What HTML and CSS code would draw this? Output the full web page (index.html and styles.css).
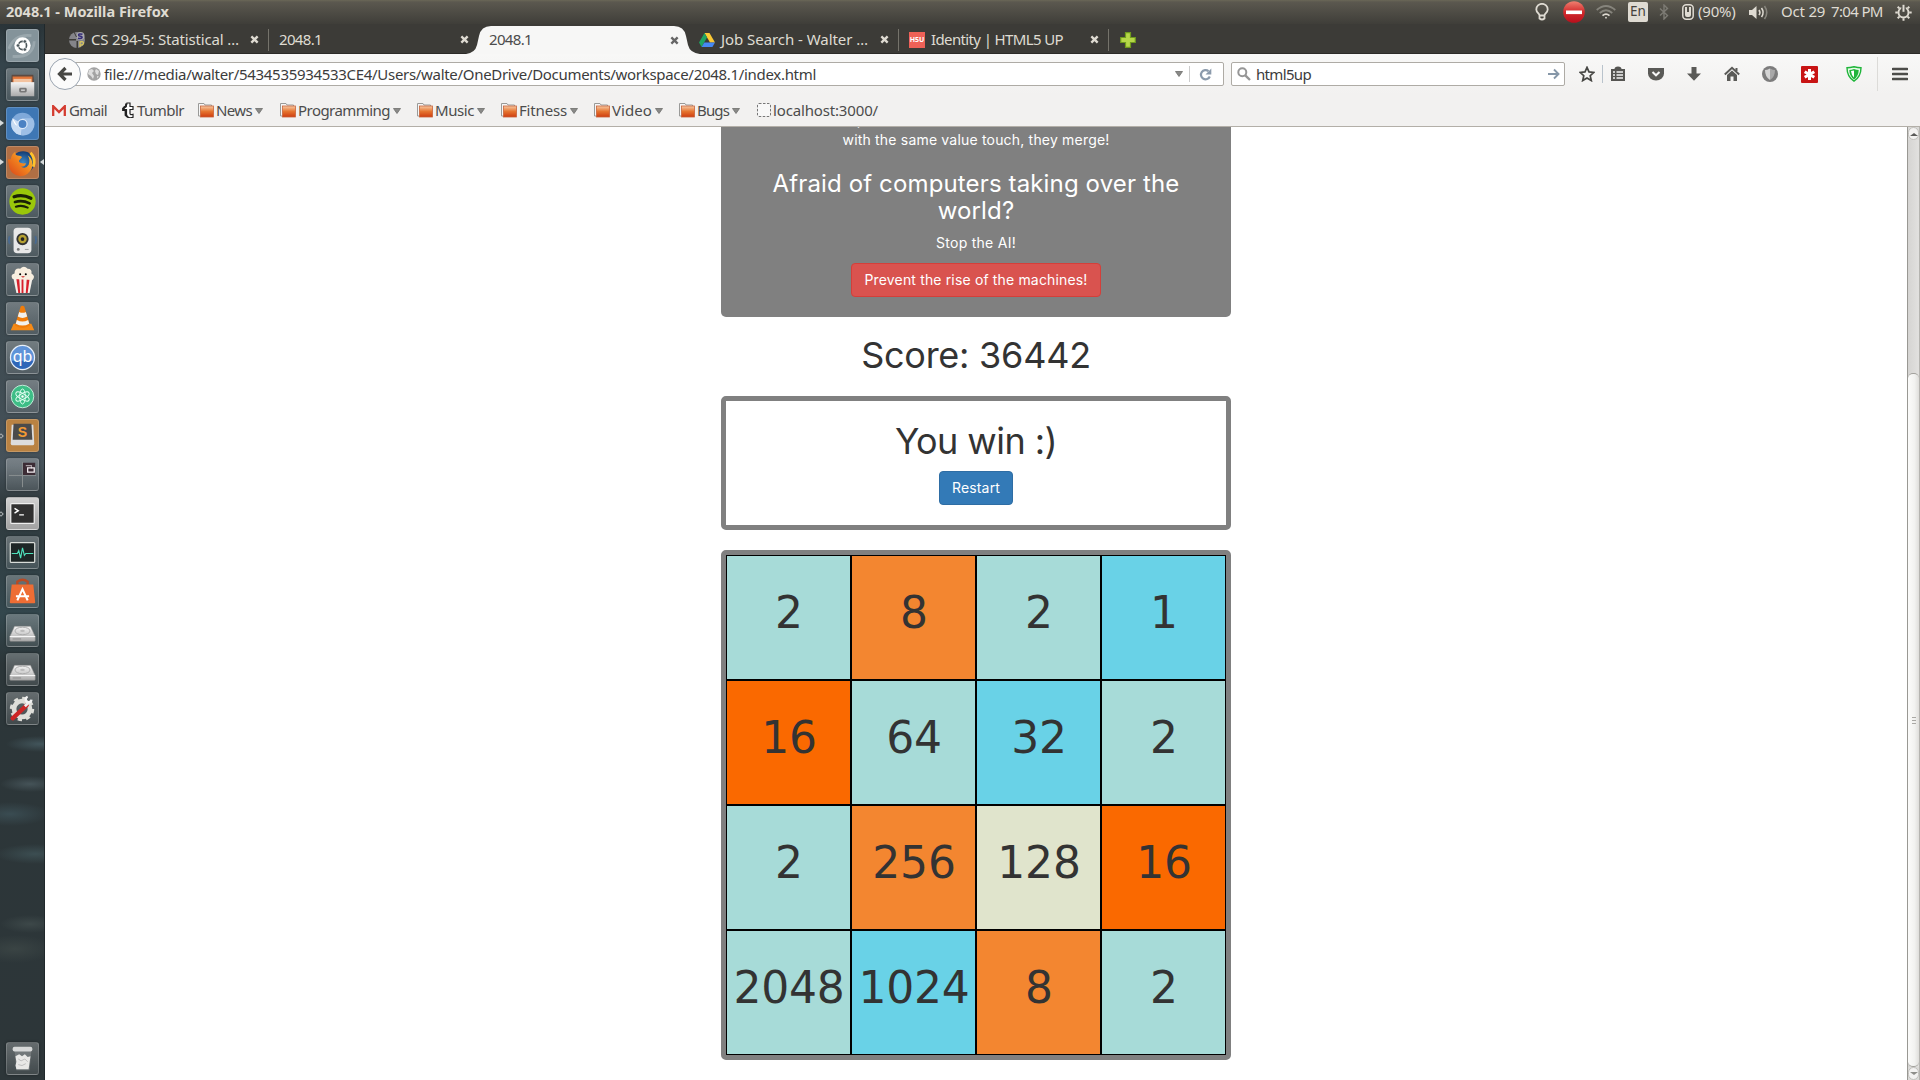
FILE: index.html
```html
<!DOCTYPE html>
<html lang="en">
<head>
<meta charset="utf-8">
<title>2048.1</title>
<link rel="stylesheet" href="styles.css">
</head>
<body>
<svg class="defs" width="0" height="0">
  <defs>
    <linearGradient id="folderFill" x1="0" y1="0" x2="0" y2="1"><stop offset="0" stop-color="#f8c9a4"/><stop offset=".5" stop-color="#e5742f"/><stop offset="1" stop-color="#cf3d10"/></linearGradient>
    <linearGradient id="metal" x1="0" y1="0" x2="0" y2="1"><stop offset="0" stop-color="#f4f4f4"/><stop offset="1" stop-color="#aaa"/></linearGradient>
    <radialGradient id="globe"><stop offset="0" stop-color="#3f8bc9"/><stop offset="1" stop-color="#123a72"/></radialGradient>
    <linearGradient id="fox" x1="1" y1="0" x2="0" y2="1"><stop offset="0" stop-color="#ffd23c"/><stop offset=".5" stop-color="#f0801e"/><stop offset="1" stop-color="#d8431a"/></linearGradient>
    <linearGradient id="stopRed" x1="0" y1="0" x2="0" y2="1"><stop offset="0" stop-color="#f08070"/><stop offset=".5" stop-color="#d22a2c"/><stop offset="1" stop-color="#b80f1c"/></linearGradient>
    <symbol id="folder" viewBox="0 0 16 16"><path d="M.5 14V1.500h5.500l1 1.500h6.500V14z" fill="#f6f6f6" stroke="#9a9a98"/><rect x="2.500" y="4" width="13" height="11" fill="url(#folderFill)" stroke="#c9633a" stroke-width=".8"/></symbol>
    <symbol id="close" viewBox="0 0 10 10"><path d="M1.500 1.500l7 7M8.500 1.500l-7 7" stroke="currentColor" stroke-width="2.600"/></symbol>
    <symbol id="tri" viewBox="0 0 8 6"><path d="M.5.5h7L4 5.500z" fill="#8a8a88" stroke="#6d6d6b" stroke-width=".8"/></symbol>
    <symbol id="disk" viewBox="0 0 33 33"><path d="M8 12h17l5 11v4q0 1-1 1H4q-1 0-1-1v-4z" fill="url(#metal)" stroke="#888" stroke-width=".6"/><path d="M3 23h27" stroke="#fff"/><ellipse cx="16.500" cy="17" rx="8" ry="4" fill="none" stroke="#aaa"/><ellipse cx="16.500" cy="17" rx="2.500" ry="1.200" fill="#bbb"/><path d="M6 25.500h9" stroke="#888"/></symbol>
  </defs>
</svg>

<header class="panel">
  <span class="panel-title">2048.1 - Mozilla Firefox</span>
  <div class="indicators">
    <svg class="i-bulb" width="14" height="18" viewBox="0 0 14 18"><path d="M4.500 12.500C4.500 10.500 1.300 9.500 1.300 6.500a5.700 5.700 0 0 1 11.400 0c0 3-3.200 4-3.200 6zM4.500 12.500v3q2.500 2 5 0v-3" fill="none" stroke="#dfdbd2" stroke-width="1.800"/></svg>
    <svg class="i-stop" width="22" height="22" viewBox="0 0 22 22"><circle cx="11" cy="11" r="10.800" fill="url(#stopRed)"/><rect x="3" y="9.500" width="16" height="3.600" fill="#fff"/></svg>
    <svg class="i-wifi" width="20" height="14" viewBox="0 0 20 14" fill="none" stroke="#86847c" stroke-width="1.700"><path d="M.7 5q9.300-8 18.600 0M3.700 8q6.300-5.500 12.600 0"/><path d="M6.500 10.700q3.500-3 7 0" stroke="#dfdbd2"/><circle cx="10" cy="12.700" r=".9" fill="#dfdbd2" stroke="none"/></svg>
    <span class="i-lang">En</span>
    <svg class="i-bt" width="10" height="16" viewBox="0 0 10 16"><path d="M1 4.500l7.500 7L5 15V1l3.500 3.500-7.500 7" fill="none" stroke="#7d7b74" stroke-width="1.400"/></svg>
    <svg class="i-mouse" width="12" height="16" viewBox="0 0 12 16"><rect x=".8" y=".8" width="10.400" height="14.400" rx="3.500" fill="none" stroke="#dfdbd2" stroke-width="1.500"/><path d="M3 3h2v5h2V3h2v8q0 2-2 2H5q-2 0-2-2z" fill="#dfdbd2"/></svg>
    <span class="i-bat">(90%)</span>
    <svg class="i-vol" width="20" height="15" viewBox="0 0 20 15"><path d="M0 5h3l4.500-4v13L3 10H0z" fill="#dfdbd2"/><path d="M10 5q1.800 2.500 0 5M12.500 3q3.200 4.500 0 9" fill="none" stroke="#dfdbd2" stroke-width="1.600"/><path d="M15.500 1q4.500 6.500 0 13" fill="none" stroke="#86847c" stroke-width="1.600"/></svg>
    <span class="i-date">Oct 29</span>
    <span class="i-time">7:04 PM</span>
    <svg class="i-gear" width="17" height="17" viewBox="0 0 17 17" stroke="#dfdbd2" fill="none"><circle cx="8.500" cy="8.500" r="5" stroke-width="1.900"/><path d="M8.500 2v6" stroke="#4e4c46" stroke-width="4.500"/><path d="M8.500.8v7" stroke-width="2"/><path d="M.3 8.500h2.500M14.200 8.500h2.500M8.500 14.200v2.500M2.700 2.700l1.700 1.700M14.300 2.700l-1.700 1.700M2.700 14.300l1.700-1.700M14.300 14.300l-1.700-1.700" stroke-width="2"/></svg>
  </div>
</header>

<div class="desktop">
<nav class="launcher">
  <div class="tile dash"><svg viewBox="0 0 33 33"><path d="M2 20Q8 4 26 6M6 28Q28 30 29 12" fill="none" stroke="#c3ced2" stroke-width="3" opacity=".35"/><circle cx="16.500" cy="16.500" r="8.700" fill="#fff"/><circle cx="16.500" cy="16.500" r="4.300" fill="none" stroke="#4b565a" stroke-width="1.800"/><g fill="#4b565a" stroke="#fff" stroke-width=".8"><circle cx="11.700" cy="16.500" r="1.900"/><circle cx="19" cy="12.200" r="1.900"/><circle cx="19" cy="20.800" r="1.900"/></g></svg></div>
  <div class="tile"><svg viewBox="0 0 33 33"><path d="M5 6h23l1 10H4z" fill="#5e4a40"/><path d="M6 8h21v6H6z" fill="#e1763a"/><path d="M7 10.500h19v5H7z" fill="#f3c3a0"/><path d="M4 14h25v15H4z" fill="url(#metal)"/><rect x="13" y="20" width="8" height="5" rx="1.500" fill="#777"/><path d="M15 22.500h4" stroke="#fff"/></svg></div>
  <div class="tile blue"><svg viewBox="0 0 33 33"><circle cx="16.500" cy="17" r="12" fill="#7fa9da"/><path d="M16.500 17L6 11A12 12 0 0 0 15 29z" fill="#c8dcf3"/><path d="M16.500 17V11h11A12 12 0 0 1 15 29z" fill="#9dbfe6"/><path d="M6 11q1 7 5 8" fill="#fff"/><circle cx="16.500" cy="17" r="5.500" fill="#dce9f8"/><circle cx="16.500" cy="17" r="4.200" fill="#4b82c3"/></svg><i class="pip"></i></div>
  <div class="tile brown"><svg viewBox="0 0 33 33"><circle cx="17" cy="16.500" r="12" fill="url(#globe)"/><path d="M4 13Q5 7 9 5q-1 3 2 4 4 0 5 2l-3 3q-1 2 2 3 3 1 5 0 0 4-5 4 5 3 8-2 2-6-1-10 5 3 5 9a12.500 12.500 0 0 1-25 1q-1-3-1-6z" fill="url(#fox)"/><path d="M25 6q6 6 3 15" stroke="#ffc22c" stroke-width="3" fill="none"/></svg><i class="pip"></i><i class="pip right"></i></div>
  <div class="tile"><svg viewBox="0 0 33 33"><circle cx="16.500" cy="16.500" r="14" fill="#9ac70a"/><g fill="none" stroke="#1a2106" stroke-linecap="round"><path d="M7.500 11.500q9-3 18 1.500" stroke-width="3.400"/><path d="M8.500 17q8-2.500 15.500 1.500" stroke-width="2.900"/><path d="M9.500 22q6.500-2 12.500 1" stroke-width="2.300"/></g></svg></div>
  <div class="tile"><svg viewBox="0 0 33 33"><path d="M3 12q-2 4 0 8M30 12q2 4 0 8" stroke="#4a6a90" stroke-width="2" fill="none"/><rect x="7" y="3" width="19" height="27" rx="4" fill="#e8e8e8"/><circle cx="16.500" cy="15" r="6.500" fill="#333"/><circle cx="16.500" cy="15" r="4.500" fill="#b5a032"/><circle cx="16.500" cy="15" r="2" fill="#222"/><circle cx="12" cy="26" r="1.500" fill="#777"/><path d="M19 26h4" stroke="#999"/></svg></div>
  <div class="tile"><svg viewBox="0 0 33 33"><path d="M7 16h20l-3 15H10z" fill="#f5f0ea"/><path d="M10 16l2 15h2l-1-15zM15.500 16v15h2V16zM21 16l-1 15h2l2-15z" fill="#d8202c"/><path d="M6 16q-3-5 2-6 0-6 6-5 4-4 8 0 5 0 4 5 5 3 1 7z" fill="#f8efe0"/><circle cx="14" cy="11" r="1.100"/><circle cx="20" cy="11" r="1.100"/><path d="M15 13q2 3 4 0z" fill="#c22"/></svg></div>
  <div class="tile"><svg viewBox="0 0 33 33"><path d="M7 22h19l3 7H4z" fill="#f58a16"/><path d="M16.500 3q1.500 0 2 1l6 20q-8 5-16 0l6-20q.5-1 2-1z" fill="#f07c0a"/><path d="M13 9.500q3.500 2 7 0l1.500 5q-5 3-10 0zM10.500 18q6 3.500 12 0l1.200 4q-7 4-14.400 0z" fill="#f1f1ee"/></svg></div>
  <div class="tile"><svg viewBox="0 0 33 33"><circle cx="16.500" cy="16.500" r="12.800" fill="#5f93d8" stroke="#e8f0fa" stroke-width="1.300"/><path d="M5 20a12 12 0 0 0 23 0z" fill="#2f66b8"/><text x="16.500" y="21" text-anchor="middle" font-family="Noto Sans" font-size="17" fill="#fff">qb</text></svg></div>
  <div class="tile"><svg viewBox="0 0 33 33"><circle cx="16.500" cy="16.500" r="12" fill="#3dbd86" stroke="#c9f0de"/><g fill="none" stroke="#e6fff4" stroke-width="1"><ellipse cx="16.500" cy="16.500" rx="3" ry="8"/><ellipse cx="16.500" cy="16.500" rx="3" ry="8" transform="rotate(60 16.500 16.500)"/><ellipse cx="16.500" cy="16.500" rx="3" ry="8" transform="rotate(120 16.500 16.500)"/></g><circle cx="16.500" cy="16.500" r="1.300" fill="#fff"/></svg></div>
  <div class="tile tan"><svg viewBox="0 0 33 33"><path d="M5 5h23l1 20q0 2-2 2H6q-2 0-2-2z" fill="#ddd"/><path d="M7 4h19l1 17H6z" fill="#4b4b4b"/><text x="16.500" y="18.500" text-anchor="middle" font-family="Liberation Sans" font-weight="bold" font-size="15" fill="#f39a34">S</text></svg><i class="pip hollow"></i></div>
  <div class="tile"><svg viewBox="0 0 33 33"><path d="M16.500 3v27M2 17.500h29" stroke="#8b9091"/><rect x="17" y="4" width="13" height="13" fill="#3c2c35"/><path d="M20 7h6v3" stroke="#a89ea4" fill="none" stroke-width="1.200"/><path d="M22 9.500h7v4.500h-7z" stroke="#f0eaee" fill="none" stroke-width="1.400"/></svg></div>
  <div class="tile light"><svg viewBox="0 0 33 33"><rect x="4" y="6" width="25" height="21" rx="1" fill="#303030" stroke="#eee" stroke-width="1.300"/><path d="M8 11l4 2.500L8 16M13 18h5" stroke="#fff" fill="none" stroke-width="1.500"/></svg><i class="pip hollow"></i></div>
  <div class="tile"><svg viewBox="0 0 33 33"><rect x="3.500" y="6" width="26" height="21" rx="1" fill="#1e2626" stroke="#d8dcd8" stroke-width="1.300"/><path d="M5 17.500h6l1.500-3 2 8 2-11 2 8 1.500-2h8" stroke="#50e3bd" fill="none" stroke-width="1.200"/></svg></div>
  <div class="tile"><svg viewBox="0 0 33 33"><path d="M11 10V6q5.500-4 11 0v4" stroke="#b84a24" stroke-width="2.500" fill="none"/><path d="M5 9h23l2 19q0 1-1 1H4q-1 0-1-1z" fill="#ee6d34"/><path d="M11 26l5.500-12L22 26M9.500 21.500h14" stroke="#fff" stroke-width="2.200" fill="none"/></svg></div>
  <div class="tile"><svg><use href="#disk"/></svg></div>
  <div class="tile"><svg><use href="#disk"/></svg></div>
  <div class="tile"><svg viewBox="0 0 33 33"><circle cx="16" cy="17" r="8.500" fill="none" stroke="#deded9" stroke-width="5"/><circle cx="16" cy="17" r="11.500" fill="none" stroke="#deded9" stroke-width="3" stroke-dasharray="4.500 4.500"/><path d="M6 27L21 13" stroke="#cc2525" stroke-width="4.500" stroke-linecap="round"/><path d="M19 14l4-4" stroke="#eee" stroke-width="3"/><path d="M26 7a3 3 0 1 1-4-3" fill="none" stroke="#f2f2f2" stroke-width="2.500"/></svg></div>
  <div class="tile trash"><svg viewBox="0 0 33 33"><path d="M8 7h18l-2 22H10z" fill="#7d8384" opacity=".7"/><rect x="6" y="4" width="21" height="5" rx="2" fill="#d6d8d8"/><path d="M9 14l4-2 3 2 3-2 3 3 3-1-2 14H10l-1-4 1-4z" fill="#e8e8e6"/><path d="M12 17l3 2 4-2 3 3M12 23l4 1 4-2" stroke="#bbb" fill="none"/></svg></div>
</nav>

<main class="browser">
  <div class="tabs">
    <div class="tab"><svg class="fav" width="16" height="16" viewBox="0 0 16 16"><circle cx="8" cy="8" r="8" fill="#85858a"/><circle cx="11.500" cy="4" r="4" fill="#a9a9ae"/><path d="M0 7h7v1.500H0zM7.500 9h1.500v7H7.500z" fill="#3c3b37"/><path d="M5 0l2.500 5" stroke="#3c3b37"/><path d="M13.500 2.300q-4-1-4 .8 0 1.200 2 1.200 2 .3 1.500 1.500-1 1.200-4 .4" fill="none" stroke="#352d78" stroke-width="1.500"/><path d="M11 15V10q4-1 3.500 1.500Q14 13.500 11 13" fill="none" stroke="#d9c65c" stroke-width="1.300"/></svg><span class="label l-cs">CS 294-5: Statistical …</span><svg class="x" width="9" height="9"><use href="#close"/></svg></div>
    <div class="tab plain"><span class="label l-num">2048.1</span><svg class="x" width="9" height="9"><use href="#close"/></svg></div>
    <div class="tab plain active"><svg class="shape" width="236" height="29" viewBox="0 0 236 29"><path d="M0 29q9-1 11-9l2-9Q15 1 25 1H208q10 0 12 10l2 9q2 8 12 9z" fill="#f7f7f6"/></svg><span class="label l-num">2048.1</span><svg class="x" width="9" height="9"><use href="#close"/></svg></div>
    <div class="tab"><svg class="fav" width="16" height="16" viewBox="0 0 16 16"><path d="M5.500 1h5L16 10.500h-5z" fill="#fcc934"/><path d="M5.500 1L0 10.500 2.600 15 8 5.500z" fill="#1fa463"/><path d="M5.300 10.500H16L13.400 15H2.600z" fill="#4688f4"/></svg><span class="label l-job">Job Search - Walter …</span><svg class="x" width="9" height="9"><use href="#close"/></svg></div>
    <div class="tab"><span class="fav hsu">H5U</span><span class="label l-id">Identity | HTML5 UP</span><svg class="x" width="9" height="9"><use href="#close"/></svg></div>
    <svg class="plus" width="16" height="16" viewBox="0 0 16 16"><path d="M5.500.7h5v4.800h4.800v5h-4.800v4.800h-5v-4.800H.7v-5h4.800z" fill="#b5d648" stroke="#6f9a1d" stroke-width="1.200"/></svg>
  </div>

  <div class="toolbar">
    <div class="back"><svg width="16" height="16" viewBox="0 0 16 16"><path d="M8.500 2L2.500 8l6 6M3 8h12" fill="none" stroke="#474744" stroke-width="3.200"/></svg></div>
    <div class="urlbar">
      <svg class="world" width="14" height="14" viewBox="0 0 14 14"><circle cx="7" cy="7" r="6.700" fill="#a3a3a3"/><path d="M2 3l3-1 2 2-2 2 2 3-1 3-2-3-3-2zM9 2l3 2-1 4-2-1-1-3zM10 9l2 .5-2 2z" fill="#dedede"/></svg>
      <span class="url">file:///media/walter/5434535934533CE4/Users/walte/OneDrive/Documents/workspace/2048.1/index.html</span>
      <svg class="drop" width="8" height="6"><use href="#tri"/></svg>
      <span class="bar"></span>
      <svg class="reload" width="13" height="13" viewBox="0 0 13 13"><path d="M10.800 8.500A4.600 4.600 0 1 1 9.500 3.200" fill="none" stroke="#8b9aab" stroke-width="2.200"/><path d="M12.300.5v6H6.500z" fill="#8b9aab"/></svg>
    </div>
    <div class="search">
      <svg width="14" height="14" viewBox="0 0 14 14"><circle cx="5.300" cy="5.300" r="4" fill="none" stroke="#969696" stroke-width="2"/><path d="M8.300 8.300l4.700 4.700" stroke="#969696" stroke-width="2.400"/></svg>
      <span class="query">html5up</span>
      <svg class="go" width="12" height="12" viewBox="0 0 12 12"><path d="M0 6h10M6 1.500L10.500 6 6 10.500" fill="none" stroke="#8697a8" stroke-width="1.900"/></svg>
    </div>
    <div class="tools">
      <svg width="16" height="16" viewBox="0 0 16 16"><path d="M8 1.400l2 4.500 4.900.5-3.700 3.300 1.100 4.900L8 12.100l-4.300 2.500 1.100-4.900L1.100 6.400 6 5.900z" fill="none" stroke="#474744" stroke-width="1.700"/></svg>
      <span class="bar"></span>
      <svg width="16" height="16" viewBox="0 0 16 16"><path d="M1 3h3.500q0-2.500 3.500-2.500T11.500 3H15v12H1z" fill="#555552"/><path d="M3 6h2M3 9h2M3 12h2M6.500 6H13M6.500 9H13M6.500 12H13" stroke="#f4f4f3" stroke-width="1.600"/></svg>
      <svg width="16" height="16" viewBox="0 0 16 16"><path d="M0 2h16v5.500a8 7 0 0 1-16 0z" fill="#5a5a57"/><path d="M4.500 6L8 9.300 11.500 6" fill="none" stroke="#f7f7f7" stroke-width="2"/></svg>
      <svg width="16" height="16" viewBox="0 0 16 16"><path d="M5.500 1h5v6.500H15L8 14.700 1 7.500h4.500z" fill="#5a5a57"/></svg>
      <svg width="16" height="16" viewBox="0 0 16 16"><path d="M.8 8.500L8 1.800l7.200 6.700M12.500 2v3" fill="none" stroke="#5a5a57" stroke-width="2"/><path d="M3 9l5-4.500L13 9v6H9.500v-4.500h-3V15H3z" fill="#5a5a57"/></svg>
      <svg width="16" height="16" viewBox="0 0 16 16"><circle cx="8" cy="8" r="8" fill="#7c7c7c"/><path d="M8 2.500q3 1.500 5 1.500 0 7-5 10z" fill="#a8a8a8"/><path d="M8 2.500Q5 4 3 4q0 7 5 10z" fill="#d4d4d4"/></svg>
      <svg class="t-red" width="17" height="17" viewBox="0 0 17 17"><rect width="17" height="17" rx="1" fill="#c81414"/><path d="M8.500 3v11M3.700 5.700l9.600 5.600M13.300 5.700l-9.600 5.600" stroke="#fff" stroke-width="3"/></svg>
      <svg class="t-green" width="16" height="16" viewBox="0 0 16 16"><path d="M8 .8q4 1 7 1 0 9-7 13.400Q1 10.800 1 1.800q3 0 7-1z" fill="#e9fbe9" stroke="#1fb53a" stroke-width="1.400"/><path d="M8 3q2.500 1 4.700 1 0 6-4.700 9.500Q3.300 10 3.300 4 5.500 4 8 3z" fill="#1fb53a"/><path d="M8 4.500v7q-2.700-2.500-3-6.500z" fill="#fff"/></svg>
      <span class="bar tall"></span>
      <svg width="16" height="14" viewBox="0 0 16 14"><path d="M1 2h14M1 7h14M1 12h14" stroke="#4d4d4a" stroke-width="2.600" stroke-linecap="round"/></svg>
    </div>
  </div>

  <div class="bookmarks">
    <div class="bm gmail"><svg width="14" height="11" viewBox="0 0 14 11"><rect width="14" height="11" fill="#f6f3f2"/><path d="M1.200 11V1.200L7 7l5.800-5.800V11" fill="none" stroke="#d43c30" stroke-width="2.300"/></svg><span>Gmail</span></div>
    <div class="bm tumblr"><svg width="13" height="16" viewBox="0 0 13 16"><path d="M5 1h3v3.500h3v3H8v4q0 1.700 3 .8v3Q4.500 17 4.500 12V7.500H2V5q3-1 3-4z" fill="#fff" stroke="#222" stroke-width="1.200"/><path d="M4 1.500v3L1 6.500V8h2.500v5L6 15.300" fill="none" stroke="#222" stroke-width="1.800"/></svg><span>Tumblr</span></div>
    <div class="bm news"><svg width="16" height="16"><use href="#folder"/></svg><span>News</span><svg class="caret" width="8" height="6"><use href="#tri"/></svg></div>
    <div class="bm prog"><svg width="16" height="16"><use href="#folder"/></svg><span>Programming</span><svg class="caret" width="8" height="6"><use href="#tri"/></svg></div>
    <div class="bm music"><svg width="16" height="16"><use href="#folder"/></svg><span>Music</span><svg class="caret" width="8" height="6"><use href="#tri"/></svg></div>
    <div class="bm fit"><svg width="16" height="16"><use href="#folder"/></svg><span>Fitness</span><svg class="caret" width="8" height="6"><use href="#tri"/></svg></div>
    <div class="bm video"><svg width="16" height="16"><use href="#folder"/></svg><span>Video</span><svg class="caret" width="8" height="6"><use href="#tri"/></svg></div>
    <div class="bm bugs"><svg width="16" height="16"><use href="#folder"/></svg><span>Bugs</span><svg class="caret" width="8" height="6"><use href="#tri"/></svg></div>
    <div class="bm local"><svg width="14" height="14" viewBox="0 0 14 14"><rect x=".5" y=".5" width="13" height="13" rx="1.500" fill="#f8f8f8" stroke="#777" stroke-dasharray="2.500 1.500"/></svg><span>localhost:3000/</span></div>
  </div>

  <div class="viewport">
    <div class="page">
      <section class="intro">
        <p class="cut">p</p>
        <p class="merge">with the same value touch, they merge!</p>
        <h3>Afraid of computers taking over the<br>world?</h3>
        <p class="stop">Stop the AI!</p>
        <button class="btn danger">Prevent the rise of the machines!</button>
      </section>
      <h1 class="score">Score: 36442</h1>
      <section class="result">
        <h1>You win :)</h1>
        <button class="btn primary">Restart</button>
      </section>
      <section class="board">
        <div class="cell teal">2</div><div class="cell orange">8</div><div class="cell teal">2</div><div class="cell cyan">1</div>
        <div class="cell deep">16</div><div class="cell teal">64</div><div class="cell cyan">32</div><div class="cell teal">2</div>
        <div class="cell teal">2</div><div class="cell orange">256</div><div class="cell cream">128</div><div class="cell deep">16</div>
        <div class="cell teal">2048</div><div class="cell cyan">1024</div><div class="cell orange">8</div><div class="cell teal">2</div>
      </section>
    </div>
    <div class="scrollbar">
      <div class="arrow"><svg width="8" height="4" viewBox="0 0 8 4"><path d="M0 4l4-3 4 3z" fill="#5a5a58"/></svg></div>
      <div class="track"><div class="thumb"><i></i><i></i><i></i></div></div>
      <div class="arrow"><svg width="8" height="4" viewBox="0 0 8 4"><path d="M0 0l4 3 4-3z" fill="#8e8e8a"/></svg></div>
    </div>
  </div>
</main>
</div>
</body>
</html>
```
FILE: styles.css
```css
* { box-sizing: border-box; }
body { margin: 0; width: 1920px; height: 1080px; overflow: hidden; display: flex; flex-direction: column; background: #fff; font-family: "Noto Sans", sans-serif; font-size: 15px; color: #3c3c3c; white-space: nowrap; }
svg { display: block; flex: none; }
.defs { position: absolute; }

.panel { height: 24px; flex: none; display: flex; align-items: center; justify-content: space-between; padding: 0 8px 0 6px; background: linear-gradient(#6a6757 0, #5b584f 2px, #3f3e39 100%); color: #dfdbd2; line-height: 22px; }
.panel-title { font-weight: bold; font-size: 14.500px; padding-bottom: 2px; }
.indicators { display: flex; align-items: center; height: 24px; width: 377px; }
.i-stop { margin-left: 14px; }
.i-wifi { margin-left: 11px; }
.i-lang { margin-left: 12px; width: 20px; height: 20px; background: #dfdbd2; color: #44423c; text-align: center; line-height: 19px; border-radius: 2px; font-size: 13.500px; }
.i-bt { margin-left: 11px; }
.i-mouse { margin-left: 13px; }
.i-bat { margin-left: 4px; width: 39px; letter-spacing: -.2px; padding-bottom: 2px; }
.i-vol { margin-left: 12px; }
.i-date { margin-left: 12px; width: 44px; letter-spacing: -.2px; padding-bottom: 2px; }
.i-time { margin-left: 6px; width: 53px; letter-spacing: -.65px; padding-bottom: 2px; }
.i-gear { margin-left: 11px; }

.desktop { flex: 1; display: flex; min-height: 0; }
.launcher { width: 45px; flex: none; display: flex; flex-direction: column; gap: 6px; padding: 5px 0 5px 6px; border-right: 1px solid #20282b; background:
  radial-gradient(30px 8px at 30px 760px, #455358, transparent), radial-gradient(40px 12px at 10px 790px, #3a4c52, transparent), radial-gradient(40px 10px at 35px 830px, #3c4e52, transparent), radial-gradient(30px 9px at 30px 900px, #3d4849, transparent), radial-gradient(40px 14px at 15px 925px, #3a4444, transparent), radial-gradient(34px 8px at 40px 720px, #42555b, transparent),
  linear-gradient(#2a3438 0, #35444b 40px, #3d4a50 300px, #46525a 440px, #303a3e 480px, #33474d 590px, #2c3639 640px, #2d3639 100%); }
.tile { position: relative; width: 33px; height: 33px; flex: none; border-radius: 3px; border: 1px solid rgba(255,255,255,.18); background: linear-gradient(rgba(255,255,255,.27), rgba(255,255,255,.1)); box-shadow: 0 0 3px rgba(0,0,0,.35); }
.tile svg { width: 31px; height: 31px; }
.tile.dash { background: #84939a; }
.tile.blue { background: #3e77b4; }
.tile.brown { background: #b06f44; }
.tile.tan { background: #b98242; }
.tile.light { background: linear-gradient(#d0d0d0, #a2a2a2); }
.tile.trash { margin-top: auto; }
.pip { position: absolute; left: -7px; top: 12px; border: 3.500px solid transparent; border-left: 4px solid #d5dadb; border-right: 0; }
.pip.right { left: auto; right: -6px; border-left: 0; border-right: 4px solid #d5dadb; }
.pip.hollow { border: 1px solid #aab0b2; width: 4px; height: 4px; left: -8px; top: 14px; transform: rotate(45deg); }

.browser { flex: 1; min-width: 0; display: flex; flex-direction: column; }
.tabs { height: 30px; flex: none; display: flex; background: #3c3b37; border-bottom: 1px solid #2c2b28; padding-left: 14px; color: #dfdbd2; }
.tab { position: relative; width: 210px; height: 29px; display: flex; align-items: center; padding: 2px 10px 0 10px; }
.tab::after { content: ""; position: absolute; right: 0; top: 5px; height: 22px; width: 1px; background: #75736b; }
.tab:nth-child(2)::after, .tab.active::after { display: none; }
.tab .fav { margin-right: 6px; }
.tab .label { position: relative; line-height: 24px; padding-bottom: 2px; }
.l-cs { letter-spacing: -.164px; }
.l-num { letter-spacing: -.654px; }
.l-job { letter-spacing: -.056px; }
.l-id { letter-spacing: -.627px; }
.tab .x { position: relative; margin-left: auto; color: #dfdbd2; }
.tab.active { color: #4c4c4c; height: 30px; }
.tab.active .x { color: #666; }
.tab .shape { position: absolute; left: -13px; top: 1px; }
.hsu { width: 16px; height: 16px; background: #ee6157; color: #fff; font-weight: bold; font-size: 7px; line-height: 16px; text-align: center; }
.plus { margin: 8px 0 0 11px; }

.toolbar { height: 40px; flex: none; display: flex; align-items: center; background: linear-gradient(#f8f8f7, #f2f1f0); padding-left: 4px; }
.back { position: relative; z-index: 1; width: 32px; height: 32px; border-radius: 50%; border: 1px solid #9aa4b0; background: #fbfbfb; display: flex; align-items: center; justify-content: center; }
.urlbar { margin-left: -7px; width: 1150px; height: 24px; border: 1px solid #aeaba5; border-radius: 0 2px 2px 0; background: #fff; display: flex; align-items: center; padding-left: 12px; color: #3c3c3c; }
.url { margin-left: 3px; line-height: 22px; letter-spacing: -.305px; }
.drop { margin-left: auto; }
.urlbar .bar { margin-left: 6px; height: 16px; width: 1px; background: #ccc; }
.reload { margin: 0 11px 0 9px; }
.search { margin-left: 7px; width: 334px; height: 24px; border: 1px solid #aeaba5; border-radius: 2px; background: #fff; display: flex; align-items: center; padding: 0 4px 0 5px; }
.query { margin-left: 5px; line-height: 22px; letter-spacing: -.665px; }
.go { margin-left: auto; }
.tools { flex: 1; display: flex; align-items: center; gap: 22px; padding-left: 14px; }
.tools .bar { width: 1px; height: 18px; background: #b9c3cc; margin: 0 -15px 0 -15px; }
.tools .bar.tall { height: 34px; margin: 0 -8px 0 -7px; background: #dcdbd8; }
.t-red { margin-left: 1px; }
.t-green { margin-left: 6px; }

.bookmarks { height: 33px; flex: none; display: flex; background: #f2f1f0; border-bottom: 1px solid #b3afa8; padding: 0 0 0 7px; color: #4c4c4c; }
.bm { display: flex; align-items: center; height: 32px; line-height: 30px; }
.bm span { margin-left: 2px; }
.bm .caret { margin-left: 3px; margin-top: 1px; }
.gmail { width: 70px; letter-spacing: -.62px; }
.gmail span { margin-left: 3px; }
.tumblr { width: 76px; letter-spacing: -.53px; }
.news { width: 82px; letter-spacing: -.637px; }
.prog { width: 137px; letter-spacing: -.545px; }
.music { width: 84px; letter-spacing: -.428px; }
.fit { width: 93px; letter-spacing: -.167px; }
.video { width: 85px; letter-spacing: .07px; }
.bugs { width: 78px; letter-spacing: -.859px; }
.local { letter-spacing: -.153px; }

.viewport { flex: 1; min-height: 0; display: flex; background: #fff; }
.page { flex: 1; display: flex; flex-direction: column; align-items: center; overflow: hidden; font-family: Inter, sans-serif; font-size: 14px; line-height: 20px; text-align: center; color: #333; }
.page p, .page h1, .page h3 { margin: 0; font-weight: 400; }
.intro { width: 510px; height: 190px; background: #808080; color: #fff; border-radius: 0 0 5px 5px; flex: none; }
.intro .cut { margin-top: -17px; padding-right: 230px; }
.merge { letter-spacing: .189px; }
.intro h3 { font-size: 24px; line-height: 27px; margin: 20px 0 9px; height: 54px; letter-spacing: .139px; }
.stop { letter-spacing: .272px; }
.btn { display: block; height: 34px; margin: 10px auto 0; padding: 0; border-radius: 4px; border: 1px solid; font: inherit; color: #fff; letter-spacing: .156px; }
.danger { width: 250px; background: #d9534f; border-color: #d43f3a; }
.primary { width: 74px; background: #337ab7; border-color: #2e6da4; }
.page h1 { font-size: 36px; line-height: 40px; letter-spacing: -.575px; }
.page .score { margin: 18px 0 21px; letter-spacing: -.25px; }
.result { width: 510px; height: 134px; border: 5px solid #808080; border-radius: 5px; padding-top: 20px; flex: none; }
.board { width: 510px; height: 510px; margin-top: 20px; flex: none; border: 5px solid #808080; border-radius: 5px; display: grid; grid-template-columns: repeat(4, 125px); grid-template-rows: repeat(4, 125px); }
.cell { border: 1px solid #000; font-family: "DejaVu Sans", sans-serif; font-size: 44px; line-height: 113px; letter-spacing: -.2px; padding-left: 1px; }
.teal { background: #a7dbd8; }
.orange { background: #f38630; }
.cyan { background: #69d2e7; }
.deep { background: #fa6900; }
.cream { background: #e0e4cc; }

.scrollbar { width: 13px; flex: none; display: flex; flex-direction: column; background: #dbdad8; border-left: 1px solid #999893; border-right: 1px solid #b5b4b0; }
.arrow { height: 13px; background: #f3f2f1; border-radius: 6px; border: 1px solid #c2c1bd; display: flex; align-items: center; justify-content: center; }
.track { flex: 1; display: flex; flex-direction: column; justify-content: flex-end; background: linear-gradient(90deg, #d5d4d2, #e2e1df); }
.thumb { height: 694px; border: 1px solid #a2a19c; border-width: 1px 0; border-radius: 5px; background: linear-gradient(90deg, #fbfbfa, #f2f2f0 60%, #dfdedb); display: flex; flex-direction: column; gap: 2px; align-items: center; justify-content: center; }
.thumb i { width: 4px; height: 1px; background: #a9a8a4; }
```
